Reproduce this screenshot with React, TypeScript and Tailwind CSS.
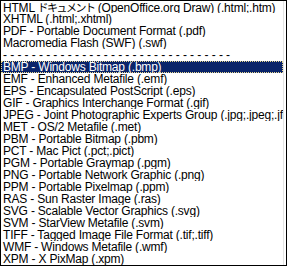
import React from "react";

const items: React.ReactNode[] = [
  <>
    HTML{" "}
    <span className="text-[11px] tracking-[-1.5px]" style={{ fontFamily: '"Noto Sans CJK JP", sans-serif' }}>
      ドキュメント
    </span>{" "}
    (OpenOffice.org Draw) (.html;.htm)
  </>,
  "XHTML (.html;.xhtml)",
  "PDF - Portable Document Format (.pdf)",
  "Macromedia Flash (SWF) (.swf)",
  <span className="tracking-[3.2px]">{"-".repeat(32)}</span>,
  "BMP - Windows Bitmap (.bmp)",
  "EMF - Enhanced Metafile (.emf)",
  "EPS - Encapsulated PostScript (.eps)",
  "GIF - Graphics Interchange Format (.gif)",
  "JPEG - Joint Photographic Experts Group (.jpg;.jpeg;.jfif;.jif;.jpe)",
  "MET - OS/2 Metafile (.met)",
  "PBM - Portable Bitmap (.pbm)",
  "PCT - Mac Pict (.pct;.pict)",
  "PGM - Portable Graymap (.pgm)",
  "PNG - Portable Network Graphic (.png)",
  "PPM - Portable Pixelmap (.ppm)",
  "RAS - Sun Raster Image (.ras)",
  "SVG - Scalable Vector Graphics (.svg)",
  "SVM - StarView Metafile (.svm)",
  "TIFF - Tagged Image File Format (.tif;.tiff)",
  "WMF - Windows Metafile (.wmf)",
  "XPM - X PixMap (.xpm)",
];

const SELECTED = 5;

export default function App() {
  return (
    <div
      className="w-[287px] h-[266px] bg-white border border-black overflow-hidden"
      style={{ fontFamily: '"Liberation Sans", "Noto Sans CJK JP", sans-serif' }}
    >
      <ul className="w-[283px] overflow-hidden border-r border-[#e4e4e4]">
        {items.map((item, i) => (
          <li
            key={i}
            className={
              "h-[12px] leading-[12px] text-[12px] tracking-[-0.2px] pl-[2px] whitespace-nowrap overflow-hidden " +
              (i === SELECTED
                ? "bg-[#0a246a] text-white outline outline-1 outline-dotted outline-offset-[-1px] outline-[#e8d890]"
                : "text-black")
            }
          >
            {item}
          </li>
        ))}
      </ul>
    </div>
  );
}
